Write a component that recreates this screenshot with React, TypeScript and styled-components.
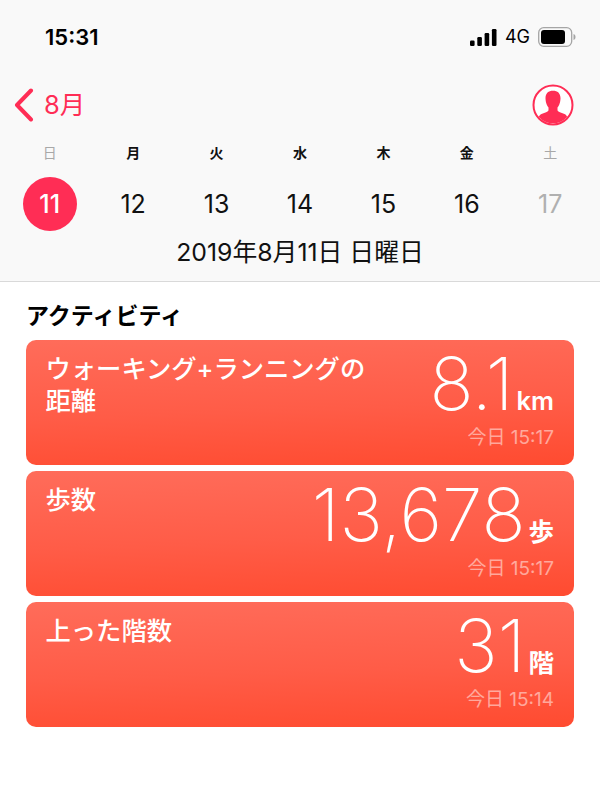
import React from "react";
import styled, { createGlobalStyle } from "styled-components";

const Global = createGlobalStyle`
  html, body { margin: 0; padding: 0; background: #fff; }
  #root { width: 600px; height: 800px; overflow: hidden; }
`;
const FONT = `Inter, "Noto Sans CJK JP", sans-serif`;

const Page = styled.div`
  width: 600px; height: 800px; background: #fff; font-family: ${FONT}; color: #000;
`;
const Header = styled.header`
  height: 281px; background: #f9f9f9; border-bottom: 1px solid #d9d9d9; display: flex; flex-direction: column;
`;
const StatusBar = styled.div`
  height: 74px; box-sizing: border-box; padding: 22px 24px 0 45px; display: flex; justify-content: space-between; align-items: flex-start;
`;
const Time = styled.div`
  font-size: 22px; line-height: 30px; font-weight: 600; letter-spacing: 0;
`;
const StatusIcons = styled.div`
  display: flex; align-items: center; gap: 8px; height: 30px;
`;
const Network = styled.span`
  font-size: 18px; font-weight: 400; line-height: 30px;
`;
const Nav = styled.div`
  height: 62px; margin-bottom: 7px; box-sizing: border-box; padding: 0 26px 0 14px; display: flex; justify-content: space-between; align-items: center;
`;
const Back = styled.div`
  display: flex; align-items: center; gap: 10px; color: #ff2d55; font-size: 25.5px; line-height: 34px; font-weight: 400;
`;
const SevenCols = styled.div`
  display: grid; grid-template-columns: repeat(7, 1fr); padding: 0 8px; justify-items: center; align-items: center;
`;
const Weekday = styled.div<{ $muted?: boolean }>`
  font-size: 14px; line-height: 20px; font-weight: ${p => (p.$muted ? 400 : 600)}; color: ${p => (p.$muted ? "#a8a8a8" : "#111")};
`;
const DayRow = styled(SevenCols)`
  margin-top: 14px; height: 54px;
`;
const Day = styled.div<{ $selected?: boolean; $muted?: boolean }>`
  width: 54px; height: 54px; border-radius: 50%; display: flex; align-items: center; justify-content: center;
  font-size: 25px; font-weight: ${p => (p.$selected ? 500 : 400)};
  background: ${p => (p.$selected ? "#ff2d55" : "transparent")};
  color: ${p => (p.$selected ? "#fff" : p.$muted ? "#b0b0b0" : "#111")};
`;
const DateLine = styled.div`
  text-align: center; font-size: 24.8px; line-height: 32px; margin-top: 5px; color: #111;
`;
const Section = styled.section`
  padding: 20px 26px 0;
`;
const SectionTitle = styled.h2`
  margin: 0 0 10px; font-size: 23px; line-height: 28px; font-weight: 600; color: #000;
`;
const Cards = styled.div`
  display: flex; flex-direction: column; gap: 6.5px;
`;
const Card = styled.div`
  height: 124.5px; box-sizing: border-box; border-radius: 10px; padding: 13px 20px 0 19.5px;
  background: linear-gradient(178deg, #ff6c5a 0%, #ff5c47 55%, #ff4b30 100%);
  display: flex; justify-content: space-between; color: #fff;
`;
const CardTitle = styled.div`
  flex: 0 1 330px; min-width: 0; font-size: 25.3px; line-height: 32px; font-weight: 500;
`;
const CardRight = styled.div`
  flex: none; display: flex; flex-direction: column; align-items: flex-end;
`;
const Value = styled.div`
  display: flex; align-items: baseline; gap: 3px; height: 72px; line-height: 72px; margin-top: -5px;
`;
const Big = styled.span`
  font-size: 73px; font-weight: 250;
`;
const Unit = styled.span`
  font-size: 25.5px; font-weight: 600;
`;
const Stamp = styled.div`
  font-size: 19px; line-height: 24px; color: rgba(255, 255, 255, 0.5); margin-top: 6px;
`;

const Chevron = () => (
  <svg width="20" height="34" viewBox="0 0 20 34" fill="none">
    <path d="M17 2.5 3 17l14 14.5" stroke="#ff2d55" strokeWidth="4" strokeLinecap="round" strokeLinejoin="round" />
  </svg>
);
const Avatar = () => (
  <svg width="42" height="42" viewBox="0 0 42 42">
    <circle cx="21" cy="21" r="19.5" fill="#fff" stroke="#ff2d55" strokeWidth="2" />
    <path
      fill="#ff2d55"
      d="M21 6.8c-4.6 0-7.6 2.6-7.5 7.6.1 2.6.6 4.6 1.2 6 .5 1.3 1.2 2.3 1.8 3V26c0 1-1 1.7-2.4 2.2L9.5 30c-1.4.6-2.2 1.5-2.6 3a19 19 0 0 0 28.2 0c-.4-1.5-1.2-2.4-2.6-3l-4.6-1.8c-1.4-.5-2.4-1.2-2.4-2.2v-2.6c.6-.7 1.3-1.7 1.8-3 .6-1.4 1.1-3.4 1.2-6 .1-5-2.9-7.6-7.5-7.6Z"
    />
  </svg>
);
const Signal = () => (
  <svg width="27" height="17" viewBox="0 0 27 17" fill="#000">
    <rect x="0" y="11.5" width="4.6" height="5.5" rx="1.2" />
    <rect x="7.3" y="8" width="4.6" height="9" rx="1.2" />
    <rect x="14.6" y="4" width="4.6" height="13" rx="1.2" />
    <rect x="21.9" y="0" width="4.6" height="17" rx="1.2" />
  </svg>
);
const Battery = () => (
  <svg width="38" height="20" viewBox="0 0 38 20">
    <rect x="0.7" y="0.7" width="33" height="18.6" rx="5" fill="none" stroke="#a5a5a5" strokeWidth="1.3" />
    <rect x="3" y="3" width="24" height="14" rx="3" fill="#000" />
    <path d="M35.5 7c1.3.4 2 1.5 2 3s-.7 2.6-2 3Z" fill="#a5a5a5" />
  </svg>
);

const weekdays = ["日", "月", "火", "水", "木", "金", "土"];
const days = [11, 12, 13, 14, 15, 16, 17];
const cards = [
  { title: <>ウォーキング+ランニングの<br />距離</>, value: "8.1", unit: "km", stamp: "今日 15:17" },
  { title: "歩数", value: "13,678", unit: "歩", stamp: "今日 15:17" },
  { title: "上った階数", value: "31", unit: "階", stamp: "今日 15:14" },
];

export default function App() {
  return (
    <Page>
      <Global />
      <Header>
        <StatusBar>
          <Time>15:31</Time>
          <StatusIcons>
            <Signal />
            <Network>4G</Network>
            <Battery />
          </StatusIcons>
        </StatusBar>
        <Nav>
          <Back><Chevron />8月</Back>
          <Avatar />
        </Nav>
        <SevenCols>
          {weekdays.map((d, i) => <Weekday key={d} $muted={i === 0 || i === 6}>{d}</Weekday>)}
        </SevenCols>
        <DayRow>
          {days.map((d, i) => <Day key={d} $selected={i === 0} $muted={i === 6}>{d}</Day>)}
        </DayRow>
        <DateLine>2019年8月11日 日曜日</DateLine>
      </Header>
      <Section>
        <SectionTitle>アクティビティ</SectionTitle>
        <Cards>
          {cards.map((c, i) => (
            <Card key={i}>
              <CardTitle>{c.title}</CardTitle>
              <CardRight>
                <Value><Big>{c.value}</Big><Unit>{c.unit}</Unit></Value>
                <Stamp>{c.stamp}</Stamp>
              </CardRight>
            </Card>
          ))}
        </Cards>
      </Section>
    </Page>
  );
}
